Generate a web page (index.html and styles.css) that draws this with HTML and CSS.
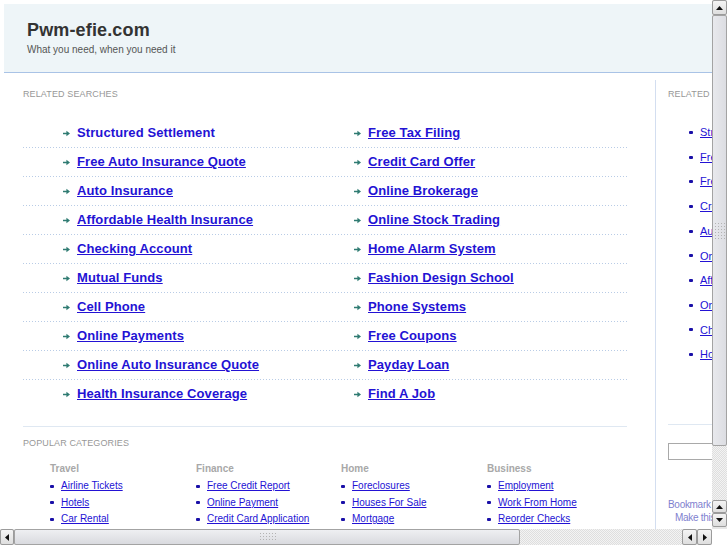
FILE: index.html
```html
<!DOCTYPE html>
<html>
<head>
<meta charset="utf-8">
<title>Pwm-efie.com</title>
<link rel="stylesheet" href="styles.css">
</head>
<body>
<div class="window">
  <div class="viewport">
    <div class="page">
      <div class="header">
        <div class="title">Pwm-efie.com</div>
        <div class="tagline">What you need, when you need it</div>
      </div>
      <div class="content">
        <div class="main">
          <div class="label">Related Searches</div>
          <div class="searches">
            <div class="row">
              <div class="cell"><svg class="arr" width="7" height="7" viewBox="0 0 7 7"><path d="M0 2.7h3.4V0.8L7 3.5 3.4 6.2V4.3H0z"/></svg><a class="big nounder" href="#">Structured Settlement</a></div>
              <div class="cell"><svg class="arr" width="7" height="7" viewBox="0 0 7 7"><path d="M0 2.7h3.4V0.8L7 3.5 3.4 6.2V4.3H0z"/></svg><a class="big" href="#">Free Tax Filing</a></div>
            </div>
            <div class="row">
              <div class="cell"><svg class="arr" width="7" height="7" viewBox="0 0 7 7"><path d="M0 2.7h3.4V0.8L7 3.5 3.4 6.2V4.3H0z"/></svg><a class="big" href="#">Free Auto Insurance Quote</a></div>
              <div class="cell"><svg class="arr" width="7" height="7" viewBox="0 0 7 7"><path d="M0 2.7h3.4V0.8L7 3.5 3.4 6.2V4.3H0z"/></svg><a class="big" href="#">Credit Card Offer</a></div>
            </div>
            <div class="row">
              <div class="cell"><svg class="arr" width="7" height="7" viewBox="0 0 7 7"><path d="M0 2.7h3.4V0.8L7 3.5 3.4 6.2V4.3H0z"/></svg><a class="big" href="#">Auto Insurance</a></div>
              <div class="cell"><svg class="arr" width="7" height="7" viewBox="0 0 7 7"><path d="M0 2.7h3.4V0.8L7 3.5 3.4 6.2V4.3H0z"/></svg><a class="big" href="#">Online Brokerage</a></div>
            </div>
            <div class="row">
              <div class="cell"><svg class="arr" width="7" height="7" viewBox="0 0 7 7"><path d="M0 2.7h3.4V0.8L7 3.5 3.4 6.2V4.3H0z"/></svg><a class="big" href="#">Affordable Health Insurance</a></div>
              <div class="cell"><svg class="arr" width="7" height="7" viewBox="0 0 7 7"><path d="M0 2.7h3.4V0.8L7 3.5 3.4 6.2V4.3H0z"/></svg><a class="big" href="#">Online Stock Trading</a></div>
            </div>
            <div class="row">
              <div class="cell"><svg class="arr" width="7" height="7" viewBox="0 0 7 7"><path d="M0 2.7h3.4V0.8L7 3.5 3.4 6.2V4.3H0z"/></svg><a class="big" href="#">Checking Account</a></div>
              <div class="cell"><svg class="arr" width="7" height="7" viewBox="0 0 7 7"><path d="M0 2.7h3.4V0.8L7 3.5 3.4 6.2V4.3H0z"/></svg><a class="big" href="#">Home Alarm System</a></div>
            </div>
            <div class="row">
              <div class="cell"><svg class="arr" width="7" height="7" viewBox="0 0 7 7"><path d="M0 2.7h3.4V0.8L7 3.5 3.4 6.2V4.3H0z"/></svg><a class="big" href="#">Mutual Funds</a></div>
              <div class="cell"><svg class="arr" width="7" height="7" viewBox="0 0 7 7"><path d="M0 2.7h3.4V0.8L7 3.5 3.4 6.2V4.3H0z"/></svg><a class="big" href="#">Fashion Design School</a></div>
            </div>
            <div class="row">
              <div class="cell"><svg class="arr" width="7" height="7" viewBox="0 0 7 7"><path d="M0 2.7h3.4V0.8L7 3.5 3.4 6.2V4.3H0z"/></svg><a class="big" href="#">Cell Phone</a></div>
              <div class="cell"><svg class="arr" width="7" height="7" viewBox="0 0 7 7"><path d="M0 2.7h3.4V0.8L7 3.5 3.4 6.2V4.3H0z"/></svg><a class="big" href="#">Phone Systems</a></div>
            </div>
            <div class="row">
              <div class="cell"><svg class="arr" width="7" height="7" viewBox="0 0 7 7"><path d="M0 2.7h3.4V0.8L7 3.5 3.4 6.2V4.3H0z"/></svg><a class="big" href="#">Online Payments</a></div>
              <div class="cell"><svg class="arr" width="7" height="7" viewBox="0 0 7 7"><path d="M0 2.7h3.4V0.8L7 3.5 3.4 6.2V4.3H0z"/></svg><a class="big" href="#">Free Coupons</a></div>
            </div>
            <div class="row">
              <div class="cell"><svg class="arr" width="7" height="7" viewBox="0 0 7 7"><path d="M0 2.7h3.4V0.8L7 3.5 3.4 6.2V4.3H0z"/></svg><a class="big" href="#">Online Auto Insurance Quote</a></div>
              <div class="cell"><svg class="arr" width="7" height="7" viewBox="0 0 7 7"><path d="M0 2.7h3.4V0.8L7 3.5 3.4 6.2V4.3H0z"/></svg><a class="big" href="#">Payday Loan</a></div>
            </div>
            <div class="row last">
              <div class="cell"><svg class="arr" width="7" height="7" viewBox="0 0 7 7"><path d="M0 2.7h3.4V0.8L7 3.5 3.4 6.2V4.3H0z"/></svg><a class="big" href="#">Health Insurance Coverage</a></div>
              <div class="cell"><svg class="arr" width="7" height="7" viewBox="0 0 7 7"><path d="M0 2.7h3.4V0.8L7 3.5 3.4 6.2V4.3H0z"/></svg><a class="big" href="#">Find A Job</a></div>
            </div>
          </div>
          <div class="popular">
            <div class="label">Popular Categories</div>
            <div class="cats">
              <div class="cat">
                <div class="cat-title">Travel</div>
                <ul class="dots">
                  <li><a href="#">Airline Tickets</a></li>
                  <li><a href="#">Hotels</a></li>
                  <li><a href="#">Car Rental</a></li>
                </ul>
              </div>
              <div class="cat">
                <div class="cat-title">Finance</div>
                <ul class="dots">
                  <li><a href="#">Free Credit Report</a></li>
                  <li><a href="#">Online Payment</a></li>
                  <li><a href="#">Credit Card Application</a></li>
                </ul>
              </div>
              <div class="cat">
                <div class="cat-title">Home</div>
                <ul class="dots">
                  <li><a href="#">Foreclosures</a></li>
                  <li><a href="#">Houses For Sale</a></li>
                  <li><a href="#">Mortgage</a></li>
                </ul>
              </div>
              <div class="cat">
                <div class="cat-title">Business</div>
                <ul class="dots">
                  <li><a href="#">Employment</a></li>
                  <li><a href="#">Work From Home</a></li>
                  <li><a href="#">Reorder Checks</a></li>
                </ul>
              </div>
            </div>
          </div>
        </div>
        <div class="side">
          <div class="side-top">
            <div class="label">Related Searches</div>
            <ul class="dots side-list">
              <li><a href="#">Structured Settlement</a></li>
              <li><a href="#">Free Auto Insurance Quote</a></li>
              <li><a href="#">Free Tax Filing</a></li>
              <li><a href="#">Credit Card Offer</a></li>
              <li><a href="#">Auto Insurance</a></li>
              <li><a href="#">Online Brokerage</a></li>
              <li><a href="#">Affordable Health Insurance</a></li>
              <li><a href="#">Online Stock Trading</a></li>
              <li><a href="#">Checking Account</a></li>
              <li><a href="#">Home Alarm System</a></li>
            </ul>
          </div>
          <div class="search-box"><input class="search-input" type="text"></div>
          <div class="side-links">
            <div class="bm">Bookmark this page</div>
            <div class="hp">Make this your homepage</div>
          </div>
        </div>
      </div>
    </div>
  </div>
  <div class="vscroll">
    <div class="sbtn v-top"><svg width="7" height="4" viewBox="0 0 7 4"><path d="M3.5 0L7 4H0z"/></svg></div>
    <div class="vthumb"><div class="grip"></div></div>
    <div class="strack"></div>
    <div class="sbtn v-up"><svg width="7" height="4" viewBox="0 0 7 4"><path d="M3.5 0L7 4H0z"/></svg></div>
    <div class="sbtn v-down"><svg width="7" height="4" viewBox="0 0 7 4"><path d="M0 0H7L3.5 4z"/></svg></div>
  </div>
  <div class="hscroll">
    <div class="sbtn h-left"><svg width="4" height="7" viewBox="0 0 4 7"><path d="M0 3.5L4 0V7z"/></svg></div>
    <div class="hthumb"><div class="grip"></div></div>
    <div class="strack"></div>
    <div class="sbtn h-l2"><svg width="4" height="7" viewBox="0 0 4 7"><path d="M0 3.5L4 0V7z"/></svg></div>
    <div class="sbtn h-r2"><svg width="4" height="7" viewBox="0 0 4 7"><path d="M0 0L4 3.5 0 7z"/></svg></div>
  </div>
  <div class="corner"></div>
</div>
</body>
</html>
```
FILE: styles.css
```css
html, body {
  margin: 0;
  padding: 0;
  background: #fff;
}
body {
  font-family: "Liberation Sans", Arial, sans-serif;
}
.window {
  display: grid;
  grid-template-columns: 712px 15px;
  grid-template-rows: 529px 16px;
  width: 727px;
  height: 545px;
  overflow: hidden;
}
.viewport {
  overflow: hidden;
}
.page {
  width: 940px;
  padding: 4px 0 0 4px;
}
.header {
  background: #eef5f8;
  border-bottom: 1px solid #a9c3e6;
  height: 53px;
  padding: 15px 0 0 23px;
}
.title {
  font-size: 18px;
  line-height: 22px;
  font-weight: bold;
  letter-spacing: 0.15px;
  color: #333;
}
.tagline {
  margin-top: 3px;
  font-size: 10px;
  line-height: 12px;
  color: #555;
}
.content {
  display: flex;
  margin-top: 7px;
  margin-left: -4px;
}
.main {
  width: 604px;
  padding: 9px 28px 0 23px;
}
.label {
  font-size: 9px;
  line-height: 11px;
  letter-spacing: 0.12px;
  text-transform: uppercase;
  color: #979797;
}
.searches {
  margin-top: 19px;
}
.row {
  display: grid;
  grid-template-columns: 331px 273px;
  height: 28px;
  align-items: center;
  border-bottom: 1px solid transparent;
  background-image: linear-gradient(to right, #b9cce6 1px, transparent 1px);
  background-size: 3px 1px;
  background-repeat: repeat-x;
  background-position: 0 100%;
  background-origin: border-box;
}
.row.last {
  background-image: none;
}
.cell {
  display: flex;
  align-items: center;
  padding-left: 40px;
}
.cell:last-child {
  padding-left: 0;
}
.arr {
  fill: #2f7b72;
  margin-right: 7px;
  flex: none;
}
a {
  color: #2312d4;
}
.big {
  font-size: 13px;
  line-height: 16px;
  font-weight: bold;
  letter-spacing: 0.1px;
}
.nounder {
  text-decoration: none;
}
.popular {
  margin-top: 17px;
  border-top: 1px solid #dfe8f2;
  padding-top: 11px;
}
.cats {
  display: grid;
  grid-template-columns: 146px 145px 146px 140px;
  padding-left: 27px;
  margin-top: 14px;
}
.cat-title {
  font-size: 10px;
  line-height: 12px;
  font-weight: bold;
  color: #a8a8a8;
}
.dots {
  list-style: none;
  margin: 3px 0 0;
  padding: 0;
}
.dots li {
  display: flex;
  align-items: center;
  font-size: 10px;
  line-height: 16.5px;
  white-space: nowrap;
}
.dots li::before {
  content: "";
  width: 4px;
  height: 3px;
  border-radius: 1px;
  background: #1a10a8;
  margin-right: 7px;
  flex: none;
}
.side {
  width: 272px;
  border-left: 1px solid #d3def0;
  padding: 9px 0 0 12px;
  min-height: 470px;
}
.side-top {
  border-bottom: 1px solid #dfe8f2;
  height: 335px;
}
.side-list {
  margin-top: 20px;
  padding-left: 21px;
}
.side-list li {
  font-size: 11px;
  line-height: 24.7px;
}
.side-list li::before {
  margin-right: 7px;
}
.search-box {
  margin-top: 18px;
}
.search-input {
  display: block;
  width: 180px;
  height: 15px;
  margin: 0;
  padding: 0;
  border: 1px solid #a9a9a9;
  font-size: 10px;
}
.side-links {
  margin-top: 38px;
  font-size: 10px;
  line-height: 13px;
  color: #7f7fcf;
  letter-spacing: -0.3px;
}
.hp {
  padding-left: 7px;
}
/* scrollbars */
.vscroll {
  display: flex;
  flex-direction: column;
  background: #e6e6e6;
}
.hscroll {
  display: flex;
  background: #e6e6e6;
}
.strack {
  flex: 1;
  background-image: repeating-conic-gradient(#dedede 0 25%, #f3f3f3 0 50%);
  background-size: 2px 2px;
}
.sbtn {
  box-sizing: border-box;
  display: flex;
  align-items: center;
  justify-content: center;
  background: linear-gradient(#f4f4f4, #dedede);
  border: 1px solid #9b9b9b;
  border-radius: 2px;
  fill: #111;
}
.v-top { height: 15px; }
.v-up { height: 13px; }
.v-down { height: 14px; margin-bottom: 2px; }
.h-left { width: 14px; }
.h-l2, .h-r2 { width: 15px; }
.vthumb {
  box-sizing: border-box;
  height: 431px;
  background: linear-gradient(to right, #e8e9ed, #dcdde2);
  border: 1px solid #a3a3a3;
  border-radius: 2px;
  display: flex;
  align-items: center;
  justify-content: center;
}
.hthumb {
  box-sizing: border-box;
  width: 506px;
  background: linear-gradient(#eeeff2, #d9dadf);
  border: 1px solid #a3a3a3;
  border-radius: 2px;
  display: flex;
  align-items: center;
  justify-content: center;
}
.grip {
  width: 11px;
  height: 17px;
  background-image: radial-gradient(circle, #b3b3b3 0.7px, transparent 0.8px);
  background-size: 3px 3px;
}
.hthumb .grip {
  width: 17px;
  height: 10px;
}
.corner {
  background: #fff;
}
```
